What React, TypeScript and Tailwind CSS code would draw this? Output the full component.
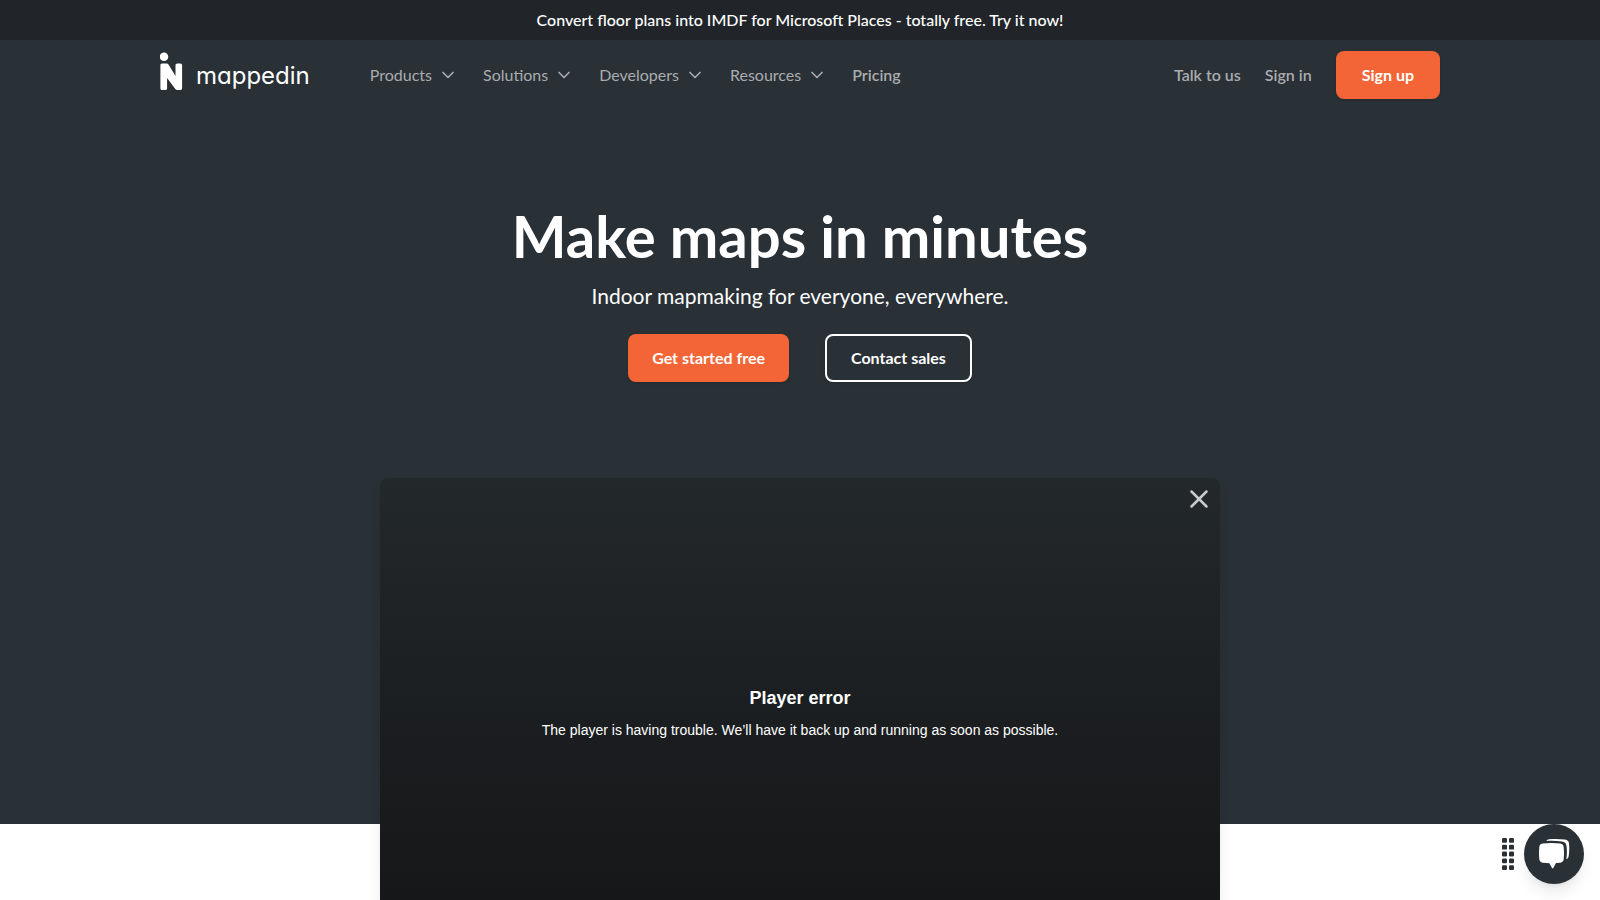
import { ChevronDown, X } from 'lucide-react';

const menus = ['Products', 'Solutions', 'Developers', 'Resources'];

function Logo() {
  return (
    <a href="#" aria-label="mappedin" className="flex items-center pb-2.5 font-[Inter,sans-serif] text-white">
      <svg className="h-10 w-6" viewBox="0 0 24 40" fill="currentColor" aria-hidden="true">
        <circle cx="4" cy="6.7" r="4.3" />
        <path d="M2 13.5h4.6c.8 0 1.4.4 1.9 1.1l7 11.4V15.3c0-1.1.7-1.8 1.8-1.8h3c1.1 0 1.8.7 1.8 1.8v22.9c0 1.1-.7 1.8-1.8 1.8h-3.1c-.8 0-1.4-.4-1.900-1.1L7.1 28v10.2c0 1.1-.7 1.8-1.8 1.8H2.2C1 40 .4 39.3.4 38.2V15.3c0-1.1.6-1.8 1.6-1.8z" />
      </svg>
      <span className="mt-3 ml-3 text-2xl leading-7 font-normal [font-feature-settings:'cv11']">mappedin</span>
    </a>
  );
}

function Header() {
  return (
    <header className="mx-auto flex h-[70px] w-full max-w-7xl items-center">
      <Logo />
      <nav className="ml-[60px] flex items-center gap-[25px] text-[#a9acae]">
        {menus.map((label) => (
          <button key={label} type="button" className="flex items-center gap-1.5">
            {label}
            <ChevronDown className="h-5 w-5" />
          </button>
        ))}
        <a href="#" className="font-semibold">Pricing</a>
      </nav>
      <div className="ml-auto flex items-center gap-6 font-semibold text-[#a9acae]">
        <a href="#">Talk to us</a>
        <a href="#">Sign in</a>
        <a href="#" className="flex h-12 items-center rounded-lg bg-[#f36536] px-[26px] font-bold text-white shadow-sm">
          Sign up
        </a>
      </div>
    </header>
  );
}

function Player() {
  return (
    <div className="relative mx-auto mt-24 -mb-[127px] flex aspect-video w-full max-w-[840px] flex-col items-center justify-center rounded-lg bg-linear-to-b from-[#23282b] to-[#141516] text-center font-['Liberation_Sans',sans-serif] text-white shadow-lg">
      <button type="button" aria-label="Close" className="absolute top-1.5 right-1.5 text-[#c9cbcc]">
        <X className="h-[30px] w-[30px]" strokeWidth={2} />
      </button>
      <h2 className="text-lg leading-6 font-bold">Player error</h2>
      <p className="mt-2 text-sm leading-6">
        The player is having trouble. We’ll have it back up and running as soon as possible.
      </p>
    </div>
  );
}

function ChatLauncher() {
  return (
    <div className="fixed right-4 bottom-4 flex items-center gap-2.5">
      <svg className="h-8 w-3" viewBox="0 0 12 32" fill="#293036" aria-hidden="true">
        {[0, 6.8, 13.6, 20.4, 27.2].map((y) => (
          <g key={y}>
            <rect x="0" y={y} width="5" height="4.8" rx="1.2" />
            <rect x="7" y={y} width="5" height="4.8" rx="1.2" />
          </g>
        ))}
      </svg>
      <button
        type="button"
        aria-label="Open chat"
        className="flex h-[60px] w-[60px] items-center justify-center rounded-full bg-[#293036] text-white shadow-lg"
      >
        <svg className="h-8 w-8" viewBox="0 0 32 32" fill="currentColor" aria-hidden="true">
          <path d="M4.700 5.600c6-.7 12-.7 17.600 0 2 .3 3.200 1.500 3.400 3.400.5 4.200.5 8.300 0 12.300-.2 2-1.400 3.100-3.300 3.400l-4.400.4-2.700 5c-.4.6-.9.6-1.300 0l-2.600-4.900-6.700-.5c-2-.3-3.200-1.500-3.400-3.400-.5-4.200-.5-8.300 0-12.300.2-2 1.300-3.100 3.400-3.400z" />
          <path d="M8.500 3c.5-1.200 1.300-1.700 2.500-1.800 5.500-.5 10-.4 16 .3 2.400.3 3.700 1.500 4 3.900.5 4.500.3 8.600-.3 12.600-.3 1.700-1 2.700-2.400 3.200.7-4.600.8-8.800.2-13.300-.4-2.700-1.900-4.100-4.600-4.400-5.400-.7-9.800-.8-15.400-.5z" />
        </svg>
      </button>
    </div>
  );
}

export default function App() {
  return (
    <div className="min-h-screen bg-white font-[Lato,sans-serif] text-base">
      <a href="#" className="flex h-10 items-center justify-center bg-[#212529] font-medium text-white">
        Convert floor plans into IMDF for Microsoft Places - totally free. Try it now!
      </a>
      <div className="bg-[#293036]">
        <Header />
        <main className="flex flex-col items-center pt-24 text-center text-white">
          <h1 className="text-[58px] leading-[60px] font-bold">Make maps in minutes</h1>
          <p className="mt-4 text-[21px] leading-7">Indoor mapmaking for everyone, everywhere.</p>
          <div className="mt-6 flex gap-9 font-bold">
            <a href="#" className="flex h-12 items-center rounded-lg bg-[#f36536] px-6 shadow-sm">
              Get started free
            </a>
            <a href="#" className="flex h-12 items-center rounded-lg border-2 border-white px-6 shadow-sm">
              Contact sales
            </a>
          </div>
          <Player />
        </main>
      </div>
      <div className="h-[200px]" />
      <ChatLauncher />
    </div>
  );
}
